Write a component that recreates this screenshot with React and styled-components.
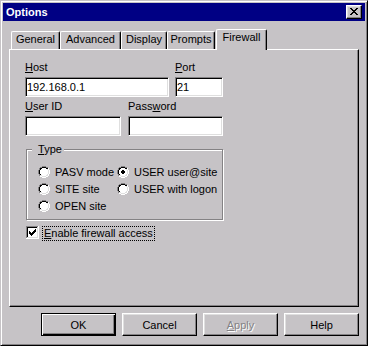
import React from 'react';
import styled, { createGlobalStyle, css } from 'styled-components';

const FACE = '#c6c3c6';
const SHADOW = '#848284';
const LIGHT = '#dfdfdf';

const GlobalStyle = createGlobalStyle`
  html, body {
    margin: 0;
    padding: 0;
    background: ${FACE};
  }
  body {
    font-family: "Liberation Sans", Arial, sans-serif;
    font-size: 11px;
    color: #000;
  }
`;

const Window = styled.div`
  width: 368px;
  height: 346px;
  box-sizing: border-box;
  background: ${FACE};
  border: 1px solid;
  border-color: ${FACE} #000 #000 ${FACE};
  box-shadow: inset 1px 1px 0 #fff, inset -1px -1px 0 ${SHADOW};
  padding: 2px;
  display: flex;
  flex-direction: column;
`;

const TitleBar = styled.div`
  height: 18px;
  flex-shrink: 0;
  background: #000084;
  color: #fff;
  font-weight: bold;
  display: flex;
  align-items: center;
  justify-content: space-between;
  padding: 0 3px 0 3px;
`;

const CloseButton = styled.button`
  width: 16px;
  height: 14px;
  box-sizing: border-box;
  padding: 0 1px 1px 0;
  background: ${FACE};
  border: 1px solid;
  border-color: #fff #000 #000 #fff;
  box-shadow: inset -1px -1px 0 ${SHADOW}, inset 1px 1px 0 ${LIGHT};
  display: flex;
  align-items: center;
  justify-content: center;
`;

const Body = styled.div`
  flex: 1;
  display: flex;
  flex-direction: column;
  padding: 8px 6px 7px 6px;
`;

const TabRow = styled.div`
  height: 20px;
  display: flex;
  align-items: flex-end;
  padding-left: 2px;
`;

const Tab = styled.div`
  box-sizing: border-box;
  width: ${(p) => p.$w}px;
  height: 18px;
  border-top: 1px solid #fff;
  border-left: 1px solid #fff;
  border-right: 1px solid #000;
  border-radius: 2px 2px 0 0;
  box-shadow: inset -1px 0 0 ${SHADOW};
  text-align: center;
  line-height: 15px;
  background: ${FACE};
  ${(p) =>
    p.$active &&
    css`
      height: 21px;
      margin-left: 1px;
      margin-bottom: -1px;
      position: relative;
      z-index: 1;
    `}
`;

const Panel = styled.div`
  height: 258px;
  flex-shrink: 0;
  box-sizing: border-box;
  border: 1px solid;
  border-color: #fff #000 #000 #fff;
  box-shadow: inset -1px -1px 0 ${SHADOW};
  padding: 11px 0 0 15px;
`;

const FieldRow = styled.div`
  display: flex;
  gap: ${(p) => p.$gap}px;
  margin-top: ${(p) => p.$top || 0}px;
`;

const Field = styled.div`
  display: flex;
  flex-direction: column;
  width: ${(p) => p.$w}px;
`;

const Label = styled.label`
  line-height: 13px;
  margin-bottom: 3px;
`;

const TextInput = styled.input`
  box-sizing: border-box;
  width: 100%;
  height: 20px;
  margin: 0;
  padding: 0 1px;
  border: 1px solid;
  border-color: ${SHADOW} #fff #fff ${SHADOW};
  box-shadow: inset 1px 1px 0 #000, inset -1px -1px 0 ${LIGHT};
  background: #fff;
  font: inherit;
  color: #000;
  outline: none;
`;

const GroupBox = styled.div`
  box-sizing: border-box;
  width: 197px;
  margin: 13px 0 0 1px;
  border: 1px solid ${SHADOW};
  box-shadow: inset 1px 1px 0 #fff, 1px 1px 0 #fff;
  padding: 0 0 5px 11px;
`;

const Legend = styled.div`
  width: fit-content;
  margin: -7px 0 0 -6px;
  padding: 0 2px 0 6px;
  background: ${FACE};
  line-height: 13px;
`;

const RadioGrid = styled.div`
  display: grid;
  grid-template-columns: 79px auto;
  grid-auto-rows: 17px;
  margin-top: 7px;
`;

const Option = styled.div`
  display: flex;
  align-items: center;
  gap: 5px;
  white-space: nowrap;
`;

const CheckRow = styled.div`
  display: flex;
  align-items: flex-start;
  gap: 3px;
  margin: 6px 0 0 1px;
`;

const FocusText = styled.span`
  border: 1px dotted #000;
  padding: 0 1px;
  line-height: 13px;
`;

const ButtonRow = styled.div`
  display: flex;
  justify-content: flex-end;
  gap: 6px;
  margin-top: 6px;
`;

const Button = styled.button`
  box-sizing: border-box;
  width: 75px;
  height: 23px;
  margin: 0;
  padding: 0;
  background: ${FACE};
  font: inherit;
  color: #000;
  border: 1px solid;
  border-color: #fff #000 #000 #fff;
  box-shadow: inset -1px -1px 0 ${SHADOW}, inset 1px 1px 0 ${LIGHT};
  ${(p) =>
    p.$default &&
    css`
      border-color: #000;
      box-shadow: inset 1px 1px 0 #fff, inset -1px -1px 0 #000,
        inset -2px -2px 0 ${SHADOW};
    `}
  ${(p) =>
    p.disabled &&
    css`
      color: ${SHADOW};
      text-shadow: 1px 1px 0 #fff;
    `}
`;

const PALETTE = { D: SHADOW, K: '#000', L: LIGHT, W: '#fff', w: '#fff', F: FACE };

function Pixels({ rows }) {
  const rects = [];
  rows.forEach((row, y) =>
    [...row].forEach((ch, x) => {
      if (PALETTE[ch]) {
        rects.push(<rect key={x + '-' + y} x={x} y={y} width="1" height="1" fill={PALETTE[ch]} />);
      }
    })
  );
  return (
    <svg width={rows[0].length} height={rows.length} shapeRendering="crispEdges" style={{ display: 'block', flexShrink: 0 }}>
      {rects}
    </svg>
  );
}

const RADIO = [
  '....DDDD....',
  '..DDKKKKDD..',
  '.DKKwwwwKKW.',
  '.DKwwwwwwLW.',
  'DKwwwwwwwwLW',
  'DKwwwwwwwwLW',
  'DKwwwwwwwwLW',
  'DKwwwwwwwwLW',
  '.DKwwwwwwLW.',
  '.DLLwwwwLLW.',
  '..WWLLLLWW..',
  '....WWWW....',
];

const RADIO_ON = [
  '....DDDD....',
  '..DDKKKKDD..',
  '.DKKwwwwKKW.',
  '.DKwwwwwwLW.',
  'DKwwwKKwwwLW',
  'DKwwKKKKwwLW',
  'DKwwKKKKwwLW',
  'DKwwwKKwwwLW',
  '.DKwwwwwwLW.',
  '.DLLwwwwLLW.',
  '..WWLLLLWW..',
  '....WWWW....',
];

const CHECKBOX = [
  'DDDDDDDDDDDDW',
  'DKKKKKKKKKKLW',
  'DKwwwwwwwwwLW',
  'DKwwwwwwwKwLW',
  'DKwwwwwwKKwLW',
  'DKwKwwwKKKwLW',
  'DKwKKwKKKwwLW',
  'DKwKKKKKwwwLW',
  'DKwwKKKwwwwLW',
  'DKwwwKwwwwwLW',
  'DKwwwwwwwwwLW',
  'DLLLLLLLLLLLW',
  'WWWWWWWWWWWWW',
];

const CLOSE = [
  'KK....KK',
  '.KK..KK.',
  '..KKKK..',
  '...KK...',
  '..KKKK..',
  '.KK..KK.',
  'KK....KK',
];

const tabs = [
  { label: 'General', w: 49 },
  { label: 'Advanced', w: 61 },
  { label: 'Display', w: 46 },
  { label: 'Prompts', w: 48 },
  { label: 'Firewall', w: 51, active: true },
];

const types = [
  { label: 'PASV mode' },
  { label: 'USER user@site', on: true },
  { label: 'SITE site' },
  { label: 'USER with logon' },
  { label: 'OPEN site' },
];

export default function App() {
  return (
    <>
      <GlobalStyle />
      <Window>
        <TitleBar>
          <span>Options</span>
          <CloseButton aria-label="Close">
            <Pixels rows={CLOSE} />
          </CloseButton>
        </TitleBar>
        <Body>
          <TabRow>
            {tabs.map((t) => (
              <Tab key={t.label} $w={t.w} $active={t.active}>
                {t.label}
              </Tab>
            ))}
          </TabRow>
          <Panel>
            <FieldRow $gap={6}>
              <Field $w={144}>
                <Label><u>H</u>ost</Label>
                <TextInput defaultValue="192.168.0.1" />
              </Field>
              <Field $w={48}>
                <Label><u>P</u>ort</Label>
                <TextInput defaultValue="21" />
              </Field>
            </FieldRow>
            <FieldRow $gap={7} $top={3}>
              <Field $w={96}>
                <Label><u>U</u>ser ID</Label>
                <TextInput />
              </Field>
              <Field $w={95}>
                <Label>Pass<u>w</u>ord</Label>
                <TextInput type="password" />
              </Field>
            </FieldRow>
            <GroupBox>
              <Legend><u>T</u>ype</Legend>
              <RadioGrid>
                {types.map((t) => (
                  <Option key={t.label}>
                    <Pixels rows={t.on ? RADIO_ON : RADIO} />
                    <span>{t.label}</span>
                  </Option>
                ))}
              </RadioGrid>
            </GroupBox>
            <CheckRow>
              <Pixels rows={CHECKBOX} />
              <FocusText><u>E</u>nable firewall access</FocusText>
            </CheckRow>
          </Panel>
          <ButtonRow>
            <Button $default>OK</Button>
            <Button>Cancel</Button>
            <Button disabled><u>A</u>pply</Button>
            <Button>Help</Button>
          </ButtonRow>
        </Body>
      </Window>
    </>
  );
}
